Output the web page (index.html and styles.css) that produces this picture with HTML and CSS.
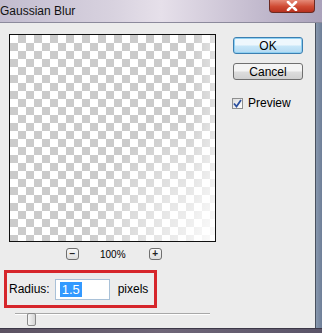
FILE: index.html
```html
<!DOCTYPE html>
<html lang="en">
<head>
  <meta charset="UTF-8">
  <title>Gaussian Blur</title>
  <link rel="stylesheet" href="styles.css">
</head>
<body>
  <div class="window">
    <div class="titlebar">
      <span class="title">Gaussian Blur</span>
      <span class="close">
        <svg width="14" height="10" viewBox="0 0 14 10"><path d="M3 1 L11 9 M11 1 L3 9" stroke="#fff" stroke-width="2.6" stroke-linecap="round"/></svg>
      </span>
    </div>
    <div class="frame">
      <div class="client">
        <div class="left">
          <div class="preview"></div>
          <div class="zoom-row">
            <span class="zbtn">&minus;</span>
            <span class="zoom-value">100%</span>
            <span class="zbtn">+</span>
          </div>
          <div class="radius-box">
            <span class="label">Radius:</span>
            <span class="field"><span class="sel">1.5</span></span>
            <span class="label">pixels</span>
          </div>
          <div class="slider">
            <div class="track"></div>
            <div class="thumb"></div>
          </div>
        </div>
        <div class="right">
          <button class="btn default">OK</button>
          <button class="btn">Cancel</button>
          <label class="check">
            <span class="box">
              <svg width="9" height="9" viewBox="0 0 9 9"><path d="M1 4.5 L3.5 7.5 L8 1" fill="none" stroke="#2b4f9e" stroke-width="1.8"/></svg>
            </span>
            Preview
          </label>
        </div>
      </div>
      <div class="rframe"></div>
    </div>
    <div class="bframe"></div>
  </div>
</body>
</html>
```

FILE: styles.css
```css
body {
  margin: 0;
  font-family: "Liberation Sans", Arial, sans-serif;
  font-size: 12px;
  color: #000;
}
.window {
  width: 322px;
  height: 333px;
  display: flex;
  flex-direction: column;
  background: #7d8ba2;
}
.titlebar {
  height: 22px;
  display: flex;
  justify-content: space-between;
  align-items: flex-start;
  background: linear-gradient(90deg, #c2bccf 0%, #d8d2df 35%, #e6e0ea 50%, #c9c1d3 75%, #aaa2bb 100%);
  border-bottom: 1px solid #8c8a9c;
}
.title {
  padding-top: 4px;
  font-size: 12px;
  color: #111;
}
.close {
  width: 44px;
  height: 12px;
  margin-right: 7px;
  border: 1px solid #6b2a22;
  border-top: none;
  border-radius: 0 0 4px 4px;
  background: linear-gradient(#e58a78, #cf4a33 55%, #b8311f);
  display: flex;
  justify-content: center;
  align-items: center;
}
.frame {
  display: flex;
  height: 305px;
}
.client {
  width: 315px;
  background: #ececec;
  display: flex;
}
.rframe {
  flex: 1;
  background: linear-gradient(90deg, #49515e 0 1px, #8797ad 1px, #6f7f98);
}
.bframe {
  flex: 1;
  background: linear-gradient(90deg, #5c5262, #6f6678 50%, #5a5468);
  border-top: 1px solid #3c3848;
}
.left {
  width: 216px;
  padding: 11px 0 0 4px;
  box-sizing: border-box;
}
.preview {
  position: relative;
  width: 207px;
  height: 208px;
  margin-left: 5px;
  box-sizing: border-box;
  border: 1px solid #111;
  background-color: #fff;
  background-image: conic-gradient(#cbcbcb 25%, #fff 0 50%, #cbcbcb 0 75%, #fff 0);
  background-size: 16px 16px;
  background-position: 0 0;
}
.preview::after {
  content: "";
  position: absolute;
  inset: 0;
  background: radial-gradient(ellipse at 100% 100%, rgba(255,255,255,0.85) 0%, rgba(255,255,255,0.5) 22%, rgba(255,255,255,0) 45%),
              linear-gradient(90deg, rgba(255,255,255,0) 88%, rgba(255,255,255,0.45));
}
.zoom-row {
  display: flex;
  align-items: center;
  margin-top: 6px;
  height: 12px;
  padding-left: 62px;
}
.zbtn {
  width: 11px;
  height: 10px;
  border: 1px solid #6f6f6f;
  border-radius: 3px;
  background: linear-gradient(#f8f8f8, #dedede);
  font-size: 10px;
  line-height: 10px;
  text-align: center;
  font-weight: bold;
  color: #222;
}
.zoom-value {
  font-size: 10px;
  margin: 0 23px 0 21px;
}
.radius-box {
  margin-top: 10px;
  width: 153px;
  height: 38px;
  box-sizing: border-box;
  border: 3px solid #d6262b;
  display: flex;
  align-items: center;
  padding-left: 2px;
}
.field {
  width: 55px;
  height: 21px;
  box-sizing: border-box;
  margin: 0 8px 0 5px;
  border: 1px solid #a9c1d8;
  background: #fff;
  display: flex;
  align-items: center;
  padding-left: 4px;
}
.sel {
  background: #3399ff;
  color: #fff;
  padding: 0 2px;
  font-size: 13px;
  line-height: 15px;
}
.slider {
  position: relative;
  height: 14px;
  margin-left: 11px;
  width: 195px;
}
.track {
  margin-top: 5px;
  height: 1px;
  background: #a8a8a8;
  border-bottom: 1px solid #fff;
}
.thumb {
  position: absolute;
  left: 12px;
  top: 0;
  width: 7px;
  height: 11px;
  border: 1px solid #8a8a8a;
  border-radius: 2px;
  background: linear-gradient(90deg, #f6f6f6, #d4d4d4);
}
.right {
  padding: 14px 0 0 17px;
  display: flex;
  flex-direction: column;
  align-items: flex-start;
}
.btn {
  width: 70px;
  height: 17px;
  padding: 0;
  font-family: "Liberation Sans", Arial, sans-serif;
  font-size: 12px;
  color: #000;
  border: 1px solid #707070;
  border-radius: 3px;
  background: linear-gradient(#f4f4f4 0 45%, #dcdcdc 55%, #d0d0d0);
  margin-bottom: 9px;
}
.btn.default {
  border-color: #3c7fb1;
  background: linear-gradient(#eef7fd 0 45%, #c7e6f8 55%, #b3d9f2);
  box-shadow: inset 0 0 0 1px #8fd0f2;
}
.check {
  display: flex;
  align-items: center;
  margin-top: 7px;
  gap: 5px;
  margin-left: -1px;
}
.box {
  width: 11px;
  height: 11px;
  box-sizing: border-box;
  border: 1px solid #8e8f8f;
  background: linear-gradient(135deg, #dcdcdc, #fff);
  display: flex;
  align-items: center;
  justify-content: center;
}
```
